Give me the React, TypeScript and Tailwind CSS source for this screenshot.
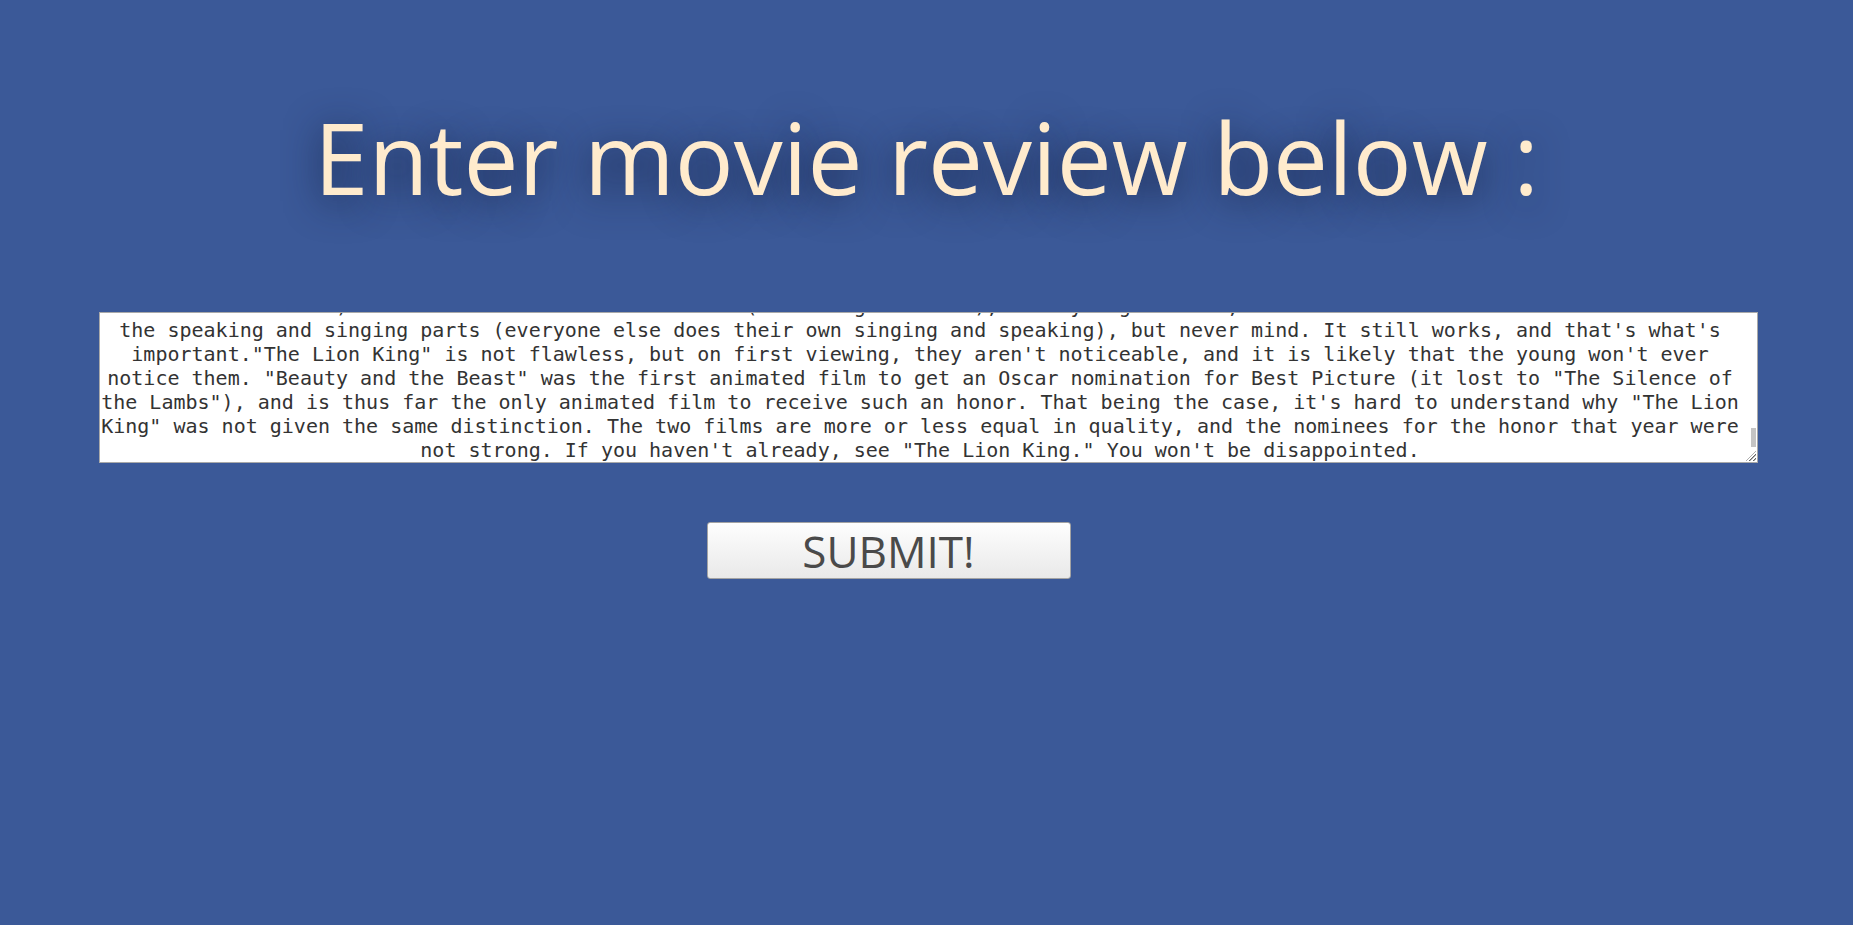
import { useEffect, useRef } from "react";

const review =
  "When \"The Lion King\" first came out in the summer of 1994, I was in the theater on opening weekend, and I have been a fan ever since. Few animated films have ever had the kind of impact this one had, both on audiences and on the industry itself. It was the highest grossing film of that year, and for a long time it was the most successful traditionally animated film ever released. Looking back at it now, it is easy to see why.\n\n" +
  "The story is simple, and it borrows freely from \"Hamlet\" and from the old tales of lost princes who must return to claim what is theirs. Simba is a young lion cub who is destined to become king of the Pride Lands after his father, Mufasa. His jealous uncle Scar has other plans, however, and with the help of a pack of hyenas he arranges a stampede in a gorge that kills Mufasa. Scar convinces Simba that the death was his fault, and the cub runs away into exile, where he is taken in by a meerkat named Timon and a warthog named Pumbaa. Years later, when the Pride Lands have fallen into ruin under Scar's rule, Simba must decide whether to face his past and return home.\n\n" +
  "The animation is breathtaking. The opening sequence alone, with the sun rising over the savanna and the animals gathering at Pride Rock, is one of the most memorable openings in film history. The wildebeest stampede, which combined hand drawn animation with computer generated imagery, still holds up remarkably well today. The colors are rich and warm, and the backgrounds are painted with a care that makes every frame look like a work of art.\n\n" +
  "The voice cast is uniformly excellent. James Earl Jones brings a quiet dignity to Mufasa, and Jeremy Irons is deliciously wicked as Scar, making him one of the great Disney villains. Nathan Lane and Ernie Sabella are hilarious as Timon and Pumbaa, and Rowan Atkinson is perfect as the fussy hornbill Zazu. Whoopi Goldberg, Cheech Marin and Jim Cummings are very funny as the three hyenas, and Robert Guillaume gives Rafiki just the right mix of wisdom and lunacy. Matthew Broderick and Jonathan Taylor Thomas do fine work as the adult and young Simba.\n\n" +
  "The music is another highlight. Hans Zimmer's score is powerful and moving, and it makes wonderful use of African choral music. The songs by Elton John and Tim Rice are catchy and memorable, and \"Can You Feel the Love Tonight\" went on to win the Academy Award for Best Original Song (although I think \"Circle\n" +
  "of Life\" was better). In the cases of Simba and Nala (Simba's girlfriend), both young and old, there is a noticeable difference between the speaking and singing parts (everyone else does their own singing and speaking), but never mind. It still works, and that's what's important.\"The Lion King\" is not flawless, but on first viewing, they aren't noticeable, and it is likely that the young won't ever notice them. \"Beauty and the Beast\" was the first animated film to get an Oscar nomination for Best Picture (it lost to \"The Silence of the Lambs\"), and is thus far the only animated film to receive such an honor. That being the case, it's hard to understand why \"The Lion King\" was not given the same distinction. The two films are more or less equal in quality, and the nominees for the honor that year were not strong. If you haven't already, see \"The Lion King.\" You won't be disappointed.";

const App = () => {
  const areaRef = useRef<HTMLTextAreaElement>(null);

  useEffect(() => {
    if (areaRef.current) {
      areaRef.current.scrollTop = areaRef.current.scrollHeight;
    }
  }, []);

  return (
    <div className="min-h-[925px] w-full bg-[#3b5998] flex flex-col items-center">
      <h1
        className="pt-[97px] text-[98px] leading-[120px] text-[#ffebcd] [text-shadow:0_6px_36px_rgba(15,25,55,0.85)]"
        style={{ fontFamily: '"Open Sans", "Noto Sans", sans-serif' }}>
        Enter movie review below :
      </h1>

      <form className="w-full flex flex-col items-center mt-[95px]">
        <div className="relative ml-[3px] w-[1659px] h-[151px]">
          <textarea
            ref={areaRef}
            name="review"
            spellCheck={false}
            defaultValue={review}
            className="block w-full h-full bg-white border border-[#a9a9a9] pl-[1px] pr-[17px] py-0 text-center text-[20px] leading-[24px] text-[#333] outline-none overflow-y-scroll"
            style={{ fontFamily: '"DejaVu Sans Mono", monospace' }}
          />
          {/* scrollbar thumb */}
          <div className="absolute right-[2px] bottom-[16px] w-[5px] h-[19px] bg-[#c4c4c4] pointer-events-none" />
          {/* resize grip */}
          <svg
            className="absolute right-[1px] bottom-[1px] pointer-events-none"
            width="13"
            height="13"
            viewBox="0 0 13 13">
            <path d="M12 2 L2 12 M12 6 L6 12 M12 10 L10 12" stroke="#b0b0b0" strokeWidth="1" />
          </svg>
        </div>

        <div className="w-full flex justify-center mt-[59px]">
          <button
            type="submit"
            className="mr-[76px] w-[364px] h-[57px] rounded-[3px] border border-[#a3a3a3] bg-gradient-to-b from-[#fefefe] to-[#e9e9e9] text-[44px] leading-none text-[#4a4a4a]"
            style={{ fontFamily: '"Open Sans", "Noto Sans", sans-serif' }}>
            SUBMIT!
          </button>
        </div>
      </form>
    </div>
  );
};

export default App;
